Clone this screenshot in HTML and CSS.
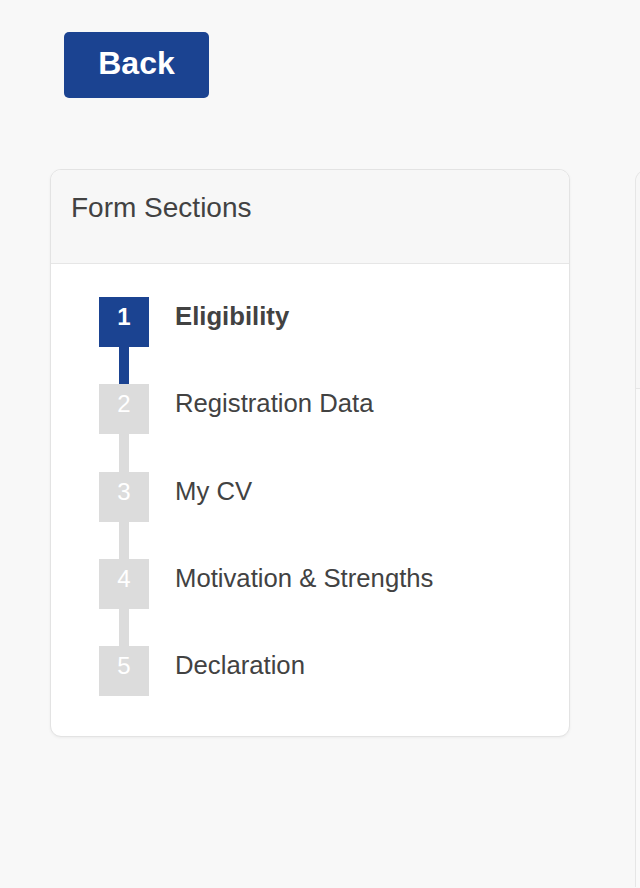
FILE: index.html
```html
<!DOCTYPE html>
<html lang="en">
<head>
<meta charset="utf-8">
<title>Form Sections</title>
<link rel="stylesheet" href="styles.css">
</head>
<body>
<div class="page">
  <div class="toolbar">
    <a class="back-btn" href="#">Back</a>
  </div>
  <div class="layout">
    <aside class="card sections">
      <div class="card-head">Form Sections</div>
      <ol class="steps">
        <li class="step active">
          <div class="marker"><span class="num">1</span><span class="line"></span></div>
          <span class="label">Eligibility</span>
        </li>
        <li class="step">
          <div class="marker"><span class="num">2</span><span class="line"></span></div>
          <span class="label">Registration Data</span>
        </li>
        <li class="step">
          <div class="marker"><span class="num">3</span><span class="line"></span></div>
          <span class="label">My CV</span>
        </li>
        <li class="step">
          <div class="marker"><span class="num">4</span><span class="line"></span></div>
          <span class="label">Motivation &amp; Strengths</span>
        </li>
        <li class="step last">
          <div class="marker"><span class="num">5</span></div>
          <span class="label">Declaration</span>
        </li>
      </ol>
    </aside>
    <section class="card main">
      <div class="main-head"></div>
      <div class="main-body"></div>
    </section>
  </div>
</div>
</body>
</html>
```
FILE: styles.css
```css
html, body {
  margin: 0;
  padding: 0;
  background: #f8f8f8;
  overflow: hidden;
  height: 888px;
}

body {
  font-family: "Liberation Sans", Arial, Helvetica, sans-serif;
  color: #424242;
}

.page {
  width: 640px;
  height: 888px;
  overflow: hidden;
}

.toolbar {
  padding: 32px 0 0 64px;
  height: 66px;
}

.back-btn {
  display: block;
  width: 145px;
  height: 62px;
  padding-bottom: 4px;
  line-height: 62px;
  background: #1b4391;
  color: #fff;
  border-radius: 5px;
  font-size: 32px;
  font-weight: bold;
  text-align: center;
  text-decoration: none;
}

.layout {
  display: flex;
  align-items: flex-start;
  margin-top: 71px;
  padding-left: 50px;
  width: 590px;
  overflow: hidden;
}

.card {
  background: #fff;
  border: 1px solid #e3e3e3;
  border-radius: 11px;
  box-shadow: 0 1px 3px rgba(0, 0, 0, 0.05);
  overflow: hidden;
}

.sections {
  width: 518px;
  flex-shrink: 0;
}

.card-head {
  background: #f7f7f7;
  border-bottom: 1px solid #e6e6e6;
  padding: 22px 20px 39px;
  font-size: 28px;
  line-height: 32px;
}

.steps {
  list-style: none;
  margin: 0;
  padding: 33px 0 40px 48px;
}

.step {
  display: flex;
  align-items: flex-start;
  gap: 26px;
}

.marker {
  width: 50px;
  display: flex;
  flex-direction: column;
  align-items: center;
  flex-shrink: 0;
}

.num {
  display: block;
  width: 50px;
  height: 50px;
  line-height: 39px;
  text-align: center;
  font-size: 24px;
  color: #fff;
  background: #dcdcdc;
}

.line {
  display: block;
  width: 10px;
  height: 37.25px;
  background: #dcdcdc;
}

.label {
  font-size: 25.7px;
  line-height: 38px;
  white-space: nowrap;
}

.step.active .num {
  background: #1b4391;
  font-weight: bold;
}

.step.active .line {
  background: #1b4391;
}

.step.active .label {
  font-weight: bold;
}

.main {
  margin-left: 65px;
  margin-top: 1px;
  width: 300px;
  height: 716px;
  flex-shrink: 0;
  background: #fafafa;
  border-color: #e6e6e6;
  border-bottom: none;
  border-radius: 11px 11px 0 0;
  box-shadow: none;
}

.main-head {
  height: 217px;
  background: #f7f7f7;
  border-bottom: 1px solid #e6e6e6;
}
```
